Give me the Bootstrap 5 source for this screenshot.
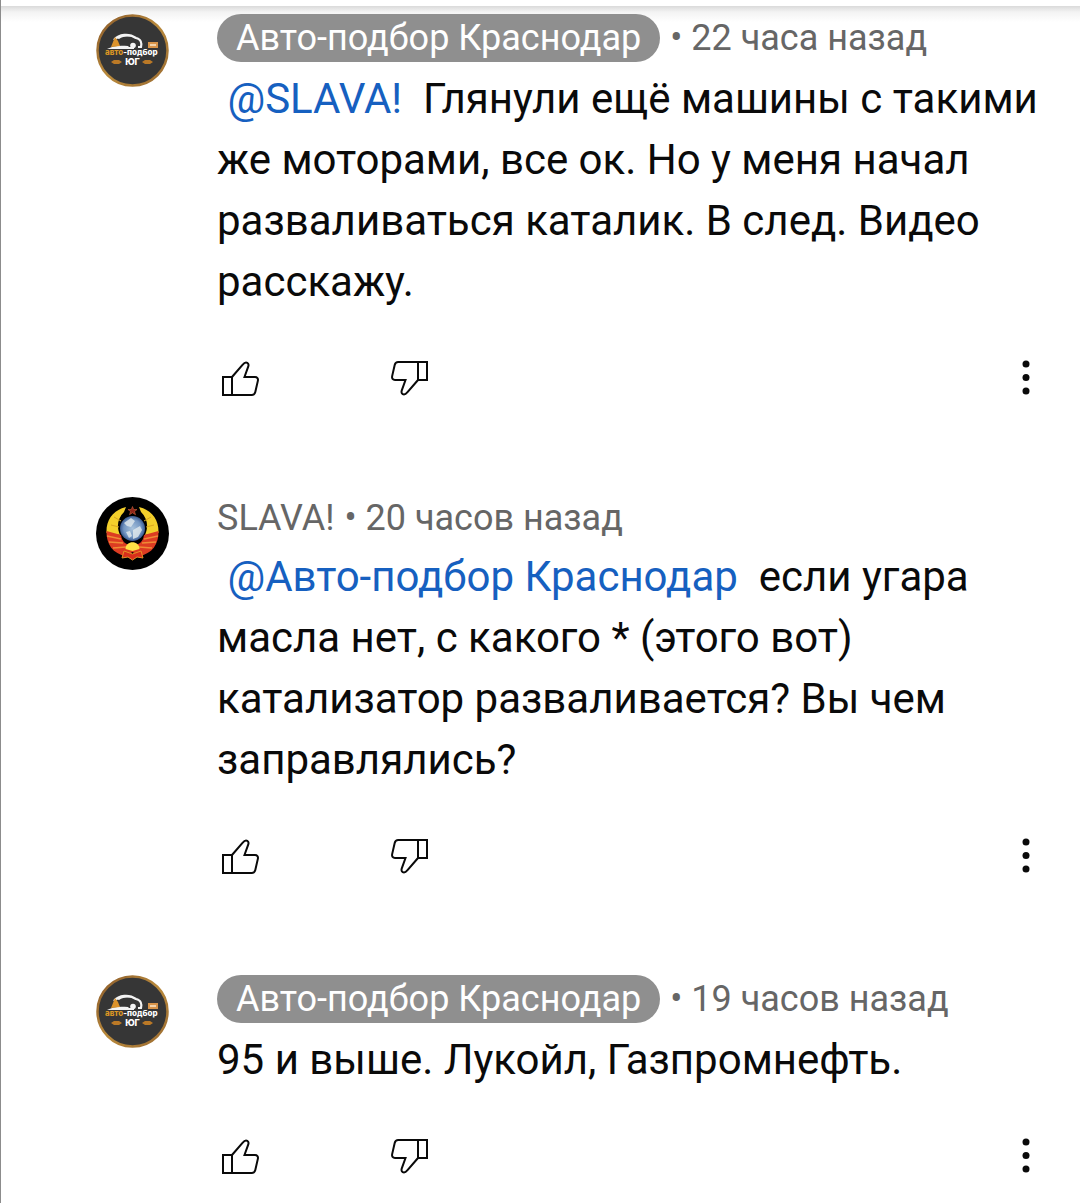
<!DOCTYPE html>
<html lang="ru">
<head>
<meta charset="utf-8">
<meta name="viewport" content="width=device-width, initial-scale=1">
<title>Ответы</title>
<link href="https://cdn.jsdelivr.net/npm/bootstrap@5.3.0/dist/css/bootstrap.min.css" rel="stylesheet">
<style>
body{font-family:Roboto,"Noto Sans",sans-serif;color:#0f0f0f;background:#fff;overflow-x:hidden}
.thread{border-left:1px solid #8c8c8c;min-height:100vh;padding:0 30px 0 95px}
.topbar{height:22px;margin:0 -30px -14px -95px;background:linear-gradient(#fff 6px,#dadada 6px,#f3f3f3 12px,#fff 22px)}
.reply{column-gap:48px;padding-bottom:95px}
.topbar + .reply{padding-top:6px}
.reply:last-child{padding-bottom:0}
.avatar{width:73px;height:73px}
.meta{font-size:36px;line-height:43px;color:#666;column-gap:10px;margin-bottom:6px}
.author{color:#666}
.author.owner{background:#8f8f8f;color:#fff;border-radius:24px;padding:0 19px;line-height:48px}
.message{font-size:42px;line-height:61px;margin:0;color:#0a0a0a;white-space:pre-wrap}
.mention{color:#1660c0}
.actions{margin-top:42px}
.act{width:48px;height:48px;color:#0a0a0a}
.votes{column-gap:120px}
</style>
<script src="https://cdn.jsdelivr.net/npm/bootstrap@5.3.0/dist/js/bootstrap.bundle.min.js"></script>
</head>
<body>
<svg width="0" height="0" class="position-absolute" aria-hidden="true">
<defs>
<linearGradient id="ring" x1="0" x2="1" y1="0" y2="1"><stop offset="0" stop-color="#8a5a2a"/><stop offset=".5" stop-color="#b98a3c"/><stop offset="1" stop-color="#9a6a30"/></linearGradient>
<radialGradient id="globe"><stop offset="0" stop-color="#a9c3dc"/><stop offset=".7" stop-color="#7396c2"/><stop offset="1" stop-color="#3a5a90"/></radialGradient>
<symbol id="up" viewBox="0 0 48 48"><g fill="none" stroke="currentColor" stroke-width="2" stroke-linejoin="miter"><path d="M6 23h9v18H6zM15 23 25.500 10.800c1-1.200 2-2.300 3.500-2.300 2 0 3 1.800 2.300 3.800L27.500 23H38c2.200 0 3.300 1.500 2.900 3.600L38.300 38c-.5 2-1.500 3-3.500 3H15"/></g></symbol>
<symbol id="down" viewBox="0 0 48 48"><use href="#up" transform="rotate(180 24 24.500)"/></symbol>
<symbol id="dots" viewBox="0 0 48 48"><g fill="currentColor"><circle cx="24" cy="10" r="3.500"/><circle cx="24" cy="23.500" r="3.500"/><circle cx="24" cy="37" r="3.500"/></g></symbol>
<symbol id="auto" viewBox="0 0 73 73">
<circle cx="36.500" cy="36.500" r="35" fill="#363636" stroke="url(#ring)" stroke-width="2.500"/>
<path d="M18 26c5-6 15-7 22-2 5 1 6 5 5 9h-3" fill="none" stroke="#f4f4f4" stroke-width="2.200"/>
<path d="M20 24c5-4 13-5 20 0-7-2-12-2-17 1z" fill="#f4f4f4"/>
<path d="M11 35c5-3 12-4 21-3l1 1h5v2z" fill="#f4f4f4"/>
<circle cx="37" cy="31.500" r="2.800" fill="#f4f4f4"/>
<path d="m15 33 4-10 3 4 2 5z" fill="#dc932b"/>
<rect x="52" y="28" width="10" height="6" fill="#d8944a"/>
<path d="M54 31h6" stroke="#f2d3ac" stroke-width="2"/>
<text x="9" y="41" font-family="Inter, sans-serif" font-size="8" font-weight="800" fill="#d99524">авто<tspan fill="#fff">-подбор</tspan></text>
<text x="36.500" y="51" text-anchor="middle" font-family="Inter, sans-serif" font-size="9" font-weight="800" fill="#fff">ЮГ</text>
<path d="m15 48 3-2h5l3 2-3 2h-5zm31 0 3-2h5l3 2-3 2h-5z" fill="#bb7926"/>
</symbol>
<symbol id="ussr" viewBox="0 0 73 73">
<circle cx="36.500" cy="36.500" r="36.500" fill="#000"/>
<path d="M30 10C17 13 10 23 10.500 36L24 38c-4-9-2-17 4-23zm13 0c13 3 20 13 19.500 26L49 38c4-9 2-17-4-23z" fill="#f3cf2b"/>
<path d="M10.500 34C10 47 17 57 30 59l6.500-4 6.500 4c13-2 20-12 19.500-25L48 38c-1 7-5 10-11.500 10S26 45 25 38z" fill="#dc3c22"/>
<path d="m11 39 14 3M13 45l14 1M17 51l13-1m32-11-14 3m12 3-14 1m10 5-13-1" stroke="#f08a35" stroke-width="1.300" fill="none"/>
<path d="m18 20 7 4m-10 4 8 2m32-10-7 4m10 4-8 2" stroke="#d9a51f" stroke-width="1" fill="none"/>
<circle cx="36.500" cy="31.500" r="12.500" fill="url(#globe)"/>
<path d="m28 26 7-5 4 3-4 6-4-1zm9 7 7-4 2 4-4 7-5 2zm-7 2 4-1 2 5-3 2z" fill="#e3ebee" opacity=".8"/>
<path d="M29.500 52c0-9 14-9 14 0l-7 2z" fill="#ffe246"/>
<path d="m26 61 2-7 8.500 3 8.500-3 2 7-6-1-4.500 3-4.500-3z" fill="#d92e1b" stroke="#e79026"/>
<path d="m36.500 9.500 1.200 3h3.300l-2.500 2 1 3.200-3-1.900-3 1.900 1-3.200-2.500-2h3.300z" fill="#8f2418" stroke="#c9603a" stroke-width=".6"/>
</symbol>
</defs>
</svg>
<main class="thread">
<div class="topbar"></div>
<article class="reply d-flex">
<svg class="avatar flex-shrink-0" role="img" aria-label="Авто-подбор Краснодар"><use href="#auto"/></svg>
<div class="flex-grow-1">
<div class="meta d-flex flex-wrap align-items-center"><a href="#" class="author owner text-decoration-none">Авто-подбор Краснодар</a><span>• 22 часа назад</span></div>
<p class="message"> <a href="#" class="mention text-decoration-none">@SLAVA!</a>  Глянули ещё машины с такими же моторами, все ок. Но у меня начал разваливаться каталик. В след. Видео расскажу.</p>
<div class="actions d-flex justify-content-between"><div class="votes d-flex"><button type="button" class="act btn border-0 p-0 d-flex" aria-label="Нравится"><svg width="48" height="48"><use href="#up"/></svg></button><button type="button" class="act btn border-0 p-0 d-flex" aria-label="Не нравится"><svg width="48" height="48"><use href="#down"/></svg></button></div><button type="button" class="act btn border-0 p-0 d-flex" aria-label="Ещё"><svg width="48" height="48"><use href="#dots"/></svg></button></div>
</div>
</article>
<article class="reply d-flex">
<svg class="avatar flex-shrink-0" role="img" aria-label="SLAVA!"><use href="#ussr"/></svg>
<div class="flex-grow-1">
<div class="meta d-flex flex-wrap align-items-center"><a href="#" class="author text-decoration-none">SLAVA!</a><span>• 20 часов назад</span></div>
<p class="message"> <a href="#" class="mention text-decoration-none">@Авто-подбор Краснодар</a>  если угара масла нет, с какого * (этого вот) катализатор разваливается? Вы чем заправлялись?</p>
<div class="actions d-flex justify-content-between"><div class="votes d-flex"><button type="button" class="act btn border-0 p-0 d-flex" aria-label="Нравится"><svg width="48" height="48"><use href="#up"/></svg></button><button type="button" class="act btn border-0 p-0 d-flex" aria-label="Не нравится"><svg width="48" height="48"><use href="#down"/></svg></button></div><button type="button" class="act btn border-0 p-0 d-flex" aria-label="Ещё"><svg width="48" height="48"><use href="#dots"/></svg></button></div>
</div>
</article>
<article class="reply d-flex">
<svg class="avatar flex-shrink-0" role="img" aria-label="Авто-подбор Краснодар"><use href="#auto"/></svg>
<div class="flex-grow-1">
<div class="meta d-flex flex-wrap align-items-center"><a href="#" class="author owner text-decoration-none">Авто-подбор Краснодар</a><span>• 19 часов назад</span></div>
<p class="message">95 и выше. Лукойл, Газпромнефть.</p>
<div class="actions d-flex justify-content-between"><div class="votes d-flex"><button type="button" class="act btn border-0 p-0 d-flex" aria-label="Нравится"><svg width="48" height="48"><use href="#up"/></svg></button><button type="button" class="act btn border-0 p-0 d-flex" aria-label="Не нравится"><svg width="48" height="48"><use href="#down"/></svg></button></div><button type="button" class="act btn border-0 p-0 d-flex" aria-label="Ещё"><svg width="48" height="48"><use href="#dots"/></svg></button></div>
</div>
</article>
</main>
</body>
</html>
